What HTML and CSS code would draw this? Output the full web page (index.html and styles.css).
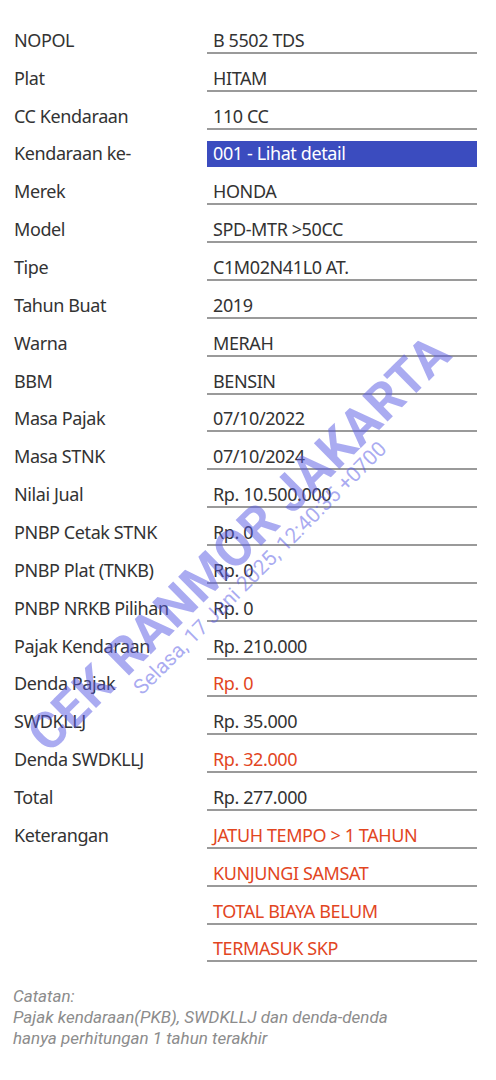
FILE: index.html
```html
<!DOCTYPE html>
<html>
<head>
<meta charset="utf-8">
<link rel="stylesheet" href="styles.css">
</head>
<body>
<div class="page">
  <div class="table">
    <div class="row"><div class="label">NOPOL</div><div class="value">B 5502 TDS</div></div>
    <div class="row"><div class="label">Plat</div><div class="value">HITAM</div></div>
    <div class="row"><div class="label">CC Kendaraan</div><div class="value">110 CC</div></div>
    <div class="row"><div class="label">Kendaraan ke-</div><div class="value link">001 - Lihat detail</div></div>
    <div class="row"><div class="label">Merek</div><div class="value">HONDA</div></div>
    <div class="row"><div class="label">Model</div><div class="value">SPD-MTR &gt;50CC</div></div>
    <div class="row"><div class="label">Tipe</div><div class="value">C1M02N41L0 AT.</div></div>
    <div class="row"><div class="label">Tahun Buat</div><div class="value">2019</div></div>
    <div class="row"><div class="label">Warna</div><div class="value">MERAH</div></div>
    <div class="row"><div class="label">BBM</div><div class="value">BENSIN</div></div>
    <div class="row"><div class="label">Masa Pajak</div><div class="value">07/10/2022</div></div>
    <div class="row"><div class="label">Masa STNK</div><div class="value">07/10/2024</div></div>
    <div class="row"><div class="label">Nilai Jual</div><div class="value">Rp. 10.500.000</div></div>
    <div class="row"><div class="label">PNBP Cetak STNK</div><div class="value">Rp. 0</div></div>
    <div class="row"><div class="label">PNBP Plat (TNKB)</div><div class="value">Rp. 0</div></div>
    <div class="row"><div class="label">PNBP NRKB Pilihan</div><div class="value">Rp. 0</div></div>
    <div class="row"><div class="label">Pajak Kendaraan</div><div class="value">Rp. 210.000</div></div>
    <div class="row"><div class="label">Denda Pajak</div><div class="value red">Rp. 0</div></div>
    <div class="row"><div class="label">SWDKLLJ</div><div class="value">Rp. 35.000</div></div>
    <div class="row"><div class="label">Denda SWDKLLJ</div><div class="value red">Rp. 32.000</div></div>
    <div class="row"><div class="label">Total</div><div class="value">Rp. 277.000</div></div>
    <div class="row"><div class="label">Keterangan</div><div class="value red">JATUH TEMPO &gt; 1 TAHUN</div></div>
    <div class="row"><div class="label"></div><div class="value red">KUNJUNGI SAMSAT</div></div>
    <div class="row"><div class="label"></div><div class="value red">TOTAL BIAYA BELUM</div></div>
    <div class="row"><div class="label"></div><div class="value red">TERMASUK SKP</div></div>
  </div>
  <div class="note">
    <div>Catatan:</div>
    <div>Pajak kendaraan(PKB), SWDKLLJ dan denda-denda</div>
    <div>hanya perhitungan 1 tahun terakhir</div>
  </div>
  <div class="wm wm-big">CEK RANMOR JAKARTA</div>
  <div class="wm wm-small">Selasa, 17 Juni 2025, 12:40:35 +0700</div>
</div>
</body>
</html>
```

FILE: styles.css
```css
html, body {
  margin: 0;
  padding: 0;
  background: #ffffff;
}
.page {
  position: relative;
  width: 496px;
  height: 1080px;
  overflow: hidden;
  font-family: "Noto Sans", "Open Sans", sans-serif;
  color: #333333;
}
.table {
  padding-top: 16px;
}
.row {
  display: flex;
  align-items: flex-end;
  height: 37.86px;
}
.label {
  width: 193px;
  padding-left: 14px;
  font-size: 18px;
  line-height: 24px;
  letter-spacing: -0.4px;
  border-bottom: 2px solid transparent;
}
.value {
  width: 270px;
  padding-left: 6px;
  box-sizing: border-box;
  font-size: 18px;
  line-height: 24px;
  letter-spacing: -0.4px;
  border-bottom: 2px solid #9a9a9a;
}
.value.link {
  background: #3b4cbf;
  color: #ffffff;
  border-bottom-color: #3b4cbf;
}
.value.red {
  color: #e2461f;
}
.note {
  margin-top: 24px;
  padding-left: 13px;
  font-family: Roboto, sans-serif;
  font-style: italic;
  font-size: 17px;
  line-height: 21px;
  color: #8c8c8c;
}
.wm {
  position: absolute;
  white-space: nowrap;
  font-family: Roboto, sans-serif;
  color: rgba(85, 88, 228, 0.5);
  pointer-events: none;
}
.wm-big {
  left: 239px;
  top: 543px;
  transform: translate(-50%, -50%) rotate(-44.5deg);
  font-size: 51px;
  font-weight: 700;
  letter-spacing: 0.5px;
}
.wm-small {
  left: 260px;
  top: 568px;
  transform: translate(-50%, -50%) rotate(-45deg);
  font-size: 21px;
}
```
